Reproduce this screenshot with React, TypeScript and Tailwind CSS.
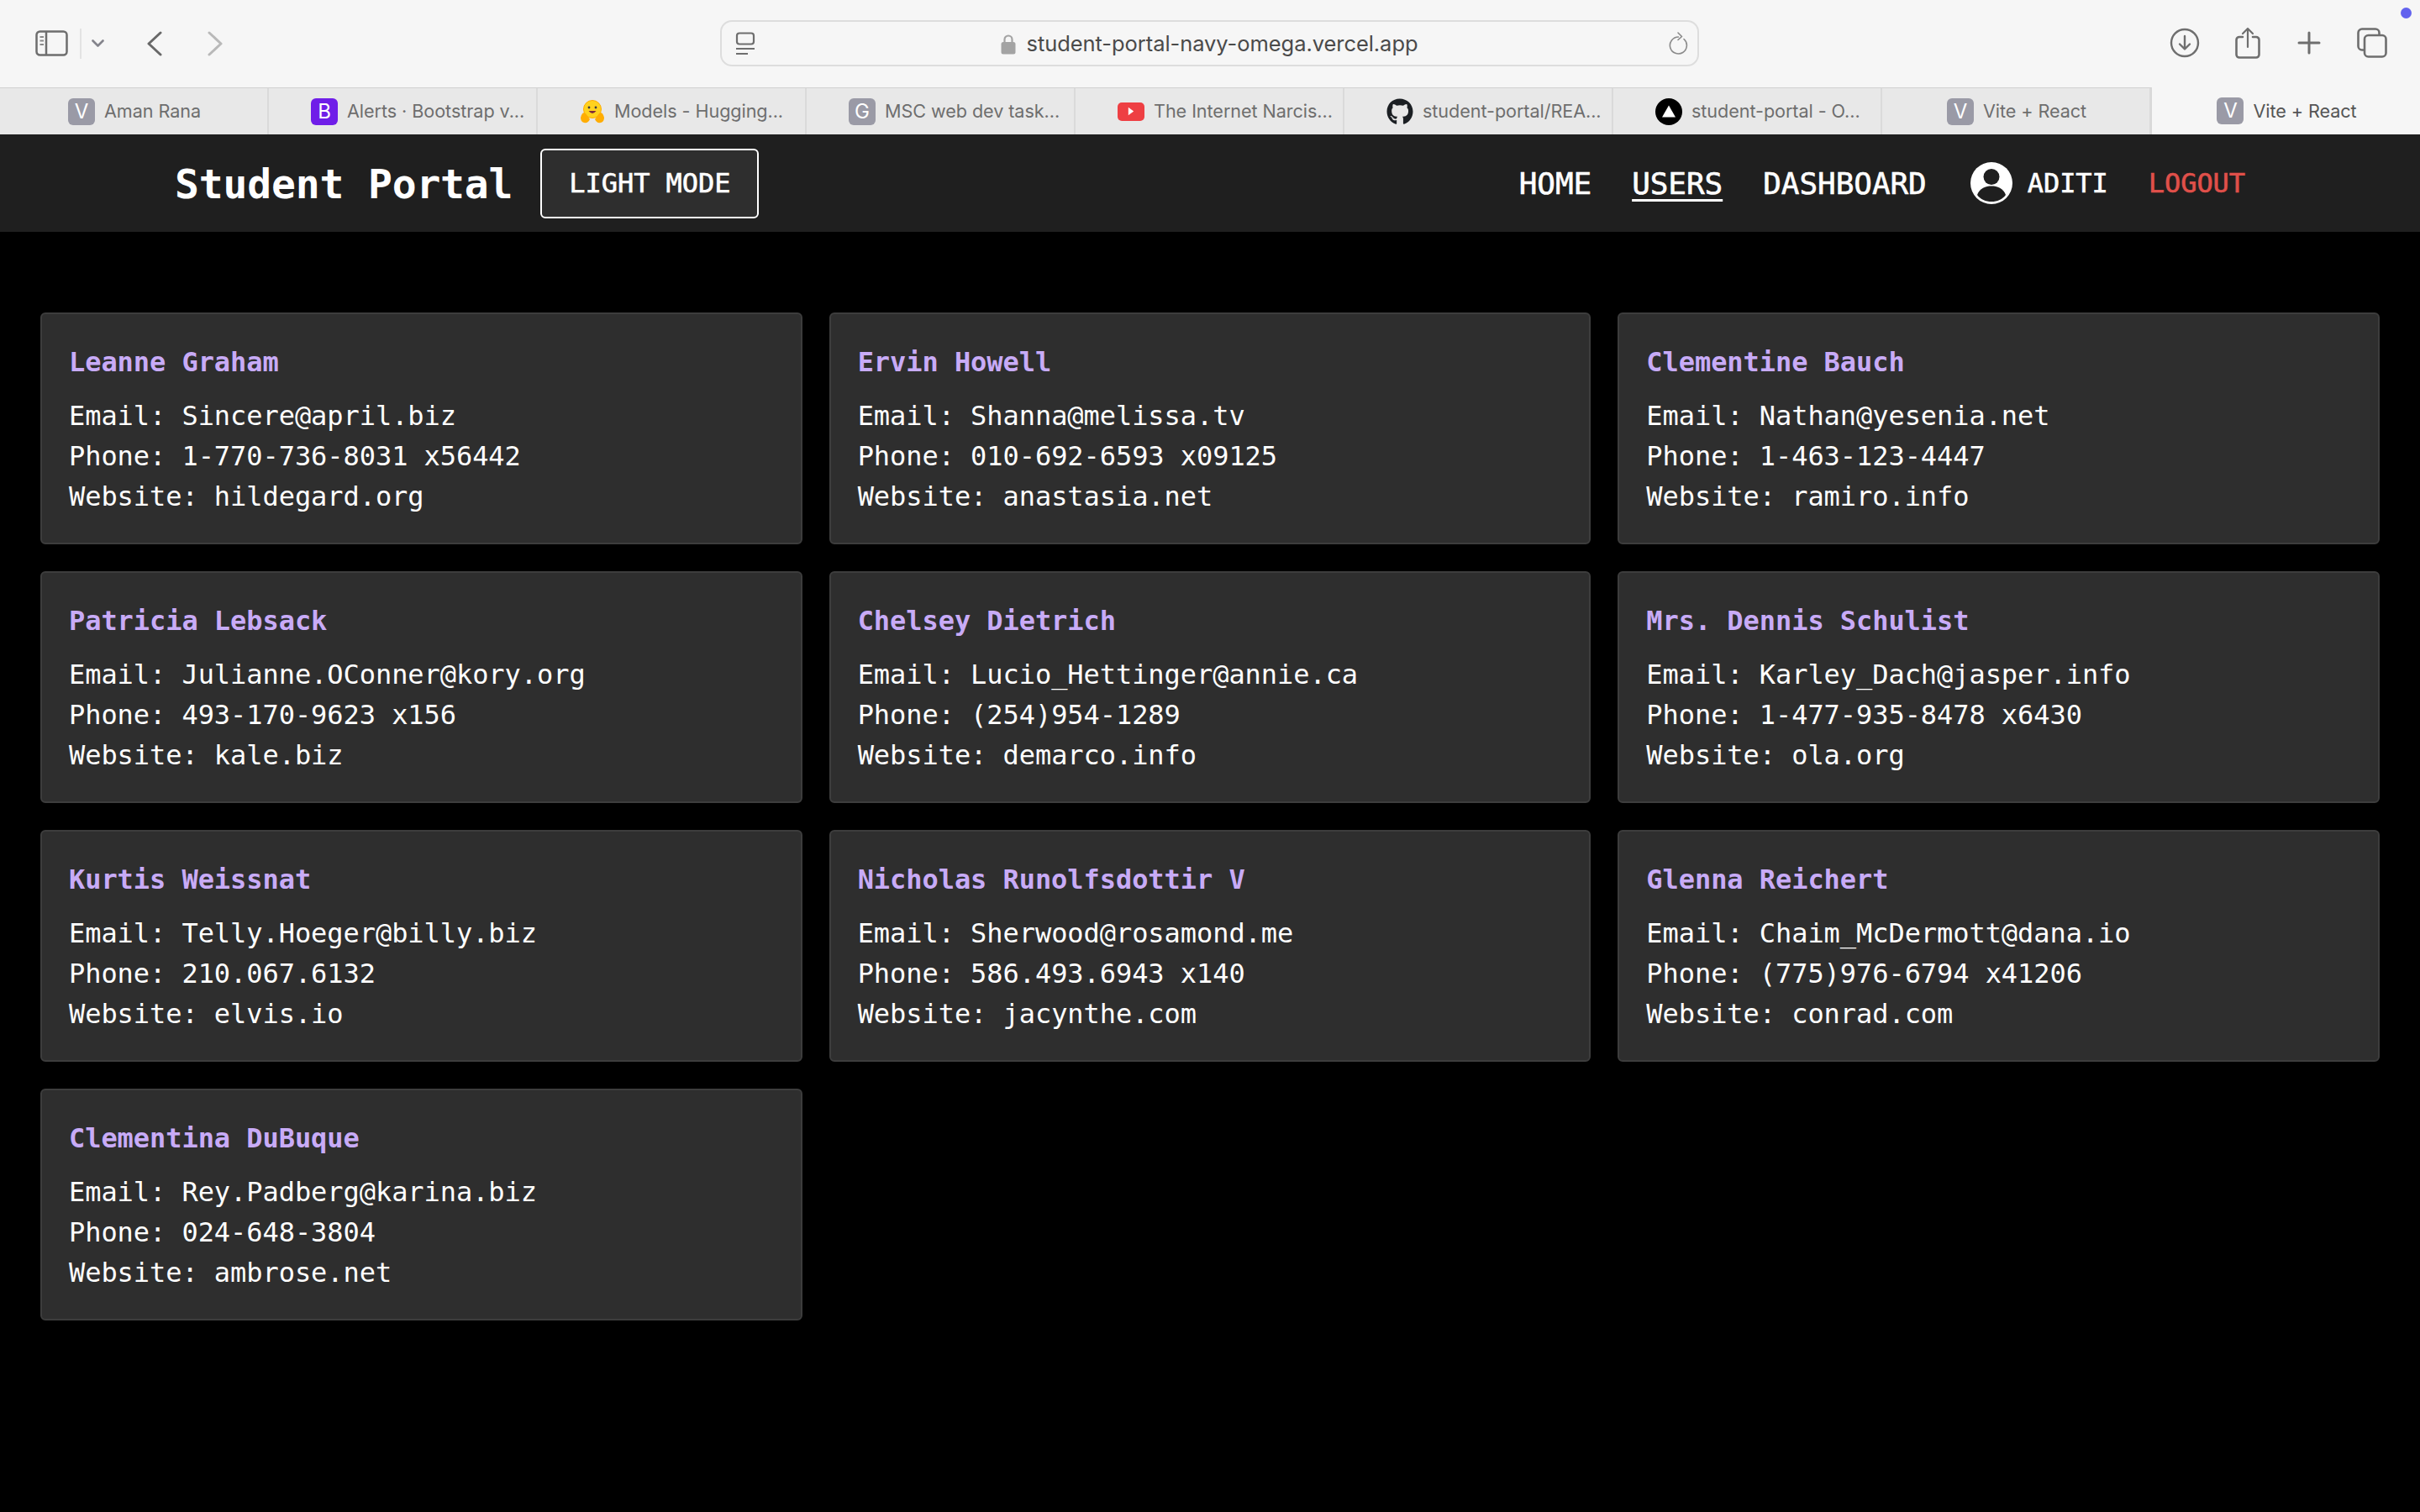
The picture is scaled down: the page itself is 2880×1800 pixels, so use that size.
import { FaGithub } from 'react-icons/fa'

const users = [
  { name: 'Leanne Graham', email: 'Sincere@april.biz', phone: '1-770-736-8031 x56442', site: 'hildegard.org' },
  { name: 'Ervin Howell', email: 'Shanna@melissa.tv', phone: '010-692-6593 x09125', site: 'anastasia.net' },
  { name: 'Clementine Bauch', email: 'Nathan@yesenia.net', phone: '1-463-123-4447', site: 'ramiro.info' },
  { name: 'Patricia Lebsack', email: 'Julianne.OConner@kory.org', phone: '493-170-9623 x156', site: 'kale.biz' },
  { name: 'Chelsey Dietrich', email: 'Lucio_Hettinger@annie.ca', phone: '(254)954-1289', site: 'demarco.info' },
  { name: 'Mrs. Dennis Schulist', email: 'Karley_Dach@jasper.info', phone: '1-477-935-8478 x6430', site: 'ola.org' },
  { name: 'Kurtis Weissnat', email: 'Telly.Hoeger@billy.biz', phone: '210.067.6132', site: 'elvis.io' },
  { name: 'Nicholas Runolfsdottir V', email: 'Sherwood@rosamond.me', phone: '586.493.6943 x140', site: 'jacynthe.com' },
  { name: 'Glenna Reichert', email: 'Chaim_McDermott@dana.io', phone: '(775)976-6794 x41206', site: 'conrad.com' },
  { name: 'Clementina DuBuque', email: 'Rey.Padberg@karina.biz', phone: '024-648-3804', site: 'ambrose.net' },
]

function LetterTile({ letter, bg = 'bg-[#9a9aa6]' }: { letter: string; bg?: string }) {
  return (
    <div className={`w-8 h-8 rounded-md ${bg} text-white text-[24px] leading-none flex items-center justify-center shrink-0`}>
      {letter}
    </div>
  )
}

function HugIcon() {
  return (
    <svg width="30" height="30" viewBox="0 0 30 30" className="shrink-0">
      <circle cx="15" cy="12" r="10.5" fill="#ffd21e" stroke="#ffad03" strokeWidth="1" />
      <circle cx="11" cy="10" r="1.4" fill="#3a3b45" />
      <circle cx="19" cy="10" r="1.4" fill="#3a3b45" />
      <path d="M10.5 14 Q15 20 19.5 14 Z" fill="#7d2a3a" />
      <path d="M1 22 Q3 14 7 17 L12 24 Q10 29 5 28 Q1 27 1 22Z" fill="#ffad03" />
      <path d="M29 22 Q27 14 23 17 L18 24 Q20 29 25 28 Q29 27 29 22Z" fill="#ffad03" />
    </svg>
  )
}

function YoutubeIcon() {
  return (
    <div className="w-8 h-[22px] rounded-[5px] bg-[#ee3f43] flex items-center justify-center shrink-0">
      <svg width="8" height="11" viewBox="0 0 10 12"><path d="M1 0 L9 6 L1 12 Z" fill="#fff" /></svg>
    </div>
  )
}

function VercelIcon() {
  return (
    <div className="w-8 h-8 rounded-full bg-black flex items-center justify-center shrink-0">
      <svg width="16" height="15" viewBox="0 0 18 16"><path d="M9 0 L18 16 L0 16 Z" fill="#fff" /></svg>
    </div>
  )
}

const tabs = [
  { icon: <LetterTile letter="V" />, title: 'Aman Rana', centered: true },
  { icon: <LetterTile letter="B" bg="bg-[#6f1ee8]" />, title: 'Alerts · Bootstrap v...' },
  { icon: <HugIcon />, title: 'Models - Hugging...' },
  { icon: <LetterTile letter="G" />, title: 'MSC web dev task...' },
  { icon: <YoutubeIcon />, title: 'The Internet Narcis...' },
  { icon: <FaGithub className="w-8 h-8 text-[#1b1f23] shrink-0" />, title: 'student-portal/REA...' },
  { icon: <VercelIcon />, title: 'student-portal - O...' },
  { icon: <LetterTile letter="V" />, title: 'Vite + React', centered: true },
  { icon: <LetterTile letter="V" />, title: 'Vite + React', centered: true, active: true },
]

function BrowserChrome() {
  return (
    <div className="font-['Inter',sans-serif]">
      <div className="h-[104px] bg-[#f6f6f6] flex items-start relative">
        <div className="w-[857px] h-[104px] flex items-center pl-[42px] pb-[1px] shrink-0">
          <svg width="39" height="31" viewBox="0 0 39 31" fill="none" stroke="#6e6e6e" strokeWidth="2.5">
            <rect x="1.5" y="1.5" width="36" height="28" rx="4" />
            <path d="M13 1.5 V29.5" />
            <path d="M5.5 8 H10 M5.5 12.5 H10 M5.5 17 H10" strokeWidth="2" stroke="#8a8a8a" />
          </svg>
          <div className="w-[2px] h-9 bg-[#e3e3e3] ml-[14px]" />
          <svg width="15" height="9" viewBox="0 0 15 9" fill="none" stroke="#84848c" strokeWidth="2.6" strokeLinecap="round" strokeLinejoin="round" className="ml-[12px]">
            <path d="M1.5 1.5 L7.5 7.5 L13.5 1.5" />
          </svg>
          <svg width="18" height="30" viewBox="0 0 18 30" fill="none" stroke="#686868" strokeWidth="3" strokeLinecap="round" strokeLinejoin="round" className="ml-[51px]">
            <path d="M16 2 L2 15 L16 28" />
          </svg>
          <svg width="18" height="30" viewBox="0 0 18 30" fill="none" stroke="#b9b9b9" strokeWidth="3" strokeLinecap="round" strokeLinejoin="round" className="ml-[54px]">
            <path d="M2 2 L16 15 L2 28" />
          </svg>
        </div>
        <div className="w-[1165px] h-[55px] mt-6 rounded-[14px] border-2 border-[#dddddd] flex items-center relative shrink-0">
          <svg width="24" height="28" viewBox="0 0 24 28" fill="none" stroke="#6e6e6e" strokeWidth="2.2" className="ml-4">
            <rect x="2" y="1.5" width="20" height="13" rx="3" />
            <path d="M1 20 H23 M1 26 H15" />
          </svg>
          <div className="flex-1 flex items-center justify-center gap-[12px] text-[25.5px] text-[#4a4a4a] pt-px pr-[6px]">
            <svg width="18" height="25" viewBox="0 0 18 25" fill="none">
              <path d="M4.5 11 V7 a4.5 4.5 0 0 1 9 0 V11" stroke="#a3a3a3" strokeWidth="2.2" />
              <rect x="0.5" y="10" width="17" height="14.5" rx="2.5" fill="#a3a3a3" />
            </svg>
            <span>student-portal-navy-omega.vercel.app</span>
          </div>
          <svg width="24" height="28" viewBox="0 0 24 28" fill="none" stroke="#8a8a8a" strokeWidth="1.6" strokeLinecap="round" strokeLinejoin="round" className="mr-[10px]">
            <path d="M18 8.5 A10 10 0 1 1 11.5 6" />
            <path d="M11 1 L15.5 5.5 L11 9.5" />
          </svg>
        </div>
        <div className="flex items-center h-[104px] pb-[2px]">
          <svg width="36" height="36" viewBox="0 0 36 36" fill="none" stroke="#6e6e6e" strokeWidth="2.4" strokeLinecap="round" strokeLinejoin="round" className="ml-[560px]">
            <circle cx="18" cy="18" r="16" />
            <path d="M18 10 V25 M12 19.5 L18 25.5 L24 19.5" />
          </svg>
          <svg width="30" height="38" viewBox="0 0 30 38" fill="none" stroke="#6e6e6e" strokeWidth="2.6" strokeLinecap="round" strokeLinejoin="round" className="ml-[42px]">
            <path d="M9 12 H5 a3.5 3.5 0 0 0 -3.5 3.5 V33 a3.5 3.5 0 0 0 3.5 3.5 H25 a3.5 3.5 0 0 0 3.5 -3.5 V15.5 a3.5 3.5 0 0 0 -3.5 -3.5 H21" />
            <path d="M15 24 V2 M9 8 L15 2 L21 8" strokeWidth="2.2" />
          </svg>
          <svg width="28" height="28" viewBox="0 0 28 28" fill="none" stroke="#6e6e6e" strokeWidth="3" strokeLinecap="round" className="ml-[44px]">
            <path d="M14 2 V26 M2 14 H26" />
          </svg>
          <svg width="36" height="36" viewBox="0 0 36 36" fill="none" stroke="#6e6e6e" strokeWidth="2.6" className="ml-[43px]">
            <rect x="9" y="9" width="25.5" height="25.5" rx="4.5" />
            <path d="M8 26.5 H6 a4.5 4.5 0 0 1 -4.5 -4.5 V6 A4.5 4.5 0 0 1 6 1.5 H22 A4.5 4.5 0 0 1 26.5 6 V8" />
          </svg>
        </div>
        <div className="absolute left-[2857px] top-[9px] w-[13px] h-[13px] rounded-full bg-[#6262ee]" />
      </div>
      <div className="h-14 grid grid-cols-9 bg-[#e8e8e8] border-t border-[#d2d2d2]">
        {tabs.map(t => (
          <div
            key={t.title + (t.active ? 'a' : '')}
            className={`flex items-center gap-[11px] text-[21.6px] overflow-hidden whitespace-nowrap ${t.centered ? 'justify-center pl-[2px]' : 'pl-[50px]'} ${t.active ? 'bg-[#f6f6f6] -mt-px border-l border-[#d8d8d8] text-[#555555]' : 'border-r-2 border-[#dadada] text-[#6e6e6e]'}`}
          >
            {t.icon}
            <span>{t.title}</span>
          </div>
        ))}
      </div>
    </div>
  )
}

export default function App() {
  return (
    <div className="min-h-[1800px] bg-black text-white font-['DejaVu_Sans_Mono',monospace] tracking-[-0.06px]">
      <BrowserChrome />
      <nav className="h-[116px] bg-[#1f1f1f] flex items-center justify-between px-[208px]">
        <div className="flex items-center gap-[33px]">
          <span className="text-[48px] font-bold leading-none tracking-[-0.16px] mt-[2px]">Student Portal</span>
          <button className="w-[260px] h-[83px] bg-[#2e2e2e] border-2 border-white rounded-md text-[32px] [-webkit-text-stroke:0.6px_white]">
            LIGHT MODE
          </button>
        </div>
        <div className="flex items-center gap-12">
          <a className="text-[36px] mt-[2px] [-webkit-text-stroke:0.6px_white]">HOME</a>
          <a className="text-[36px] mt-[2px] underline decoration-[3px] underline-offset-[6px] [-webkit-text-stroke:0.6px_white]">USERS</a>
          <a className="text-[36px] mt-[2px] [-webkit-text-stroke:0.6px_white]">DASHBOARD</a>
          <div className="flex items-center gap-[18px] ml-[4px]">
            <svg width="50" height="50" viewBox="0 0 50 50">
              <circle cx="25" cy="25" r="25" fill="#fff" />
              <circle cx="25" cy="17.5" r="9.5" fill="#1f1f1f" />
              <path d="M8 39 C11 31 18 28.5 25 28.5 C32 28.5 39 31 42 39 C38 44.5 32 47 25 47 C18 47 12 44.5 8 39Z" fill="#1f1f1f" />
            </svg>
            <span className="text-[32px] [-webkit-text-stroke:0.6px_white]">ADITI</span>
          </div>
          <button className="text-[32px] text-[#e0504a] [-webkit-text-stroke:0.6px_#e0504a]">LOGOUT</button>
        </div>
      </nav>
      <main className="px-12 pt-24 grid grid-cols-3 gap-8">
        {users.map(u => (
          <div key={u.name} className="bg-[#2e2e2e] border-2 border-[#3d3d3d] rounded-md px-8 pt-[33px] pb-[31px] text-[32px] leading-12">
            <h3 className="font-bold text-[#c8abf7] mb-4">{u.name}</h3>
            <p>Email: {u.email}</p>
            <p>Phone: {u.phone}</p>
            <p>Website: {u.site}</p>
          </div>
        ))}
      </main>
    </div>
  )
}
